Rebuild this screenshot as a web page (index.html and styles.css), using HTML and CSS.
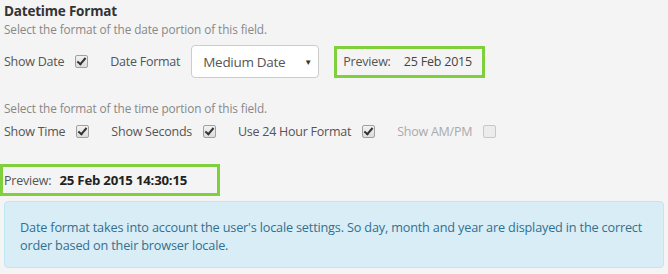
FILE: index.html
```html
<!DOCTYPE html>
<html>
<head>
<meta charset="utf-8">
<link rel="stylesheet" href="styles.css">
</head>
<body>
<div class="panel">
  <div class="title">Datetime Format</div>
  <div class="hint hint-date">Select the format of the date portion of this field.</div>
  <div class="row row-date">
    <div class="field"><span class="label">Show Date</span><span class="cb checked"></span></div>
    <div class="field"><span class="label">Date Format</span>
      <div class="select"><span>Medium Date</span><span class="arrow">▼</span></div>
    </div>
    <div class="preview preview-date"><span class="p-label">Preview:</span><span class="p-value">25 Feb 2015</span></div>
  </div>
  <div class="hint hint-time">Select the format of the time portion of this field.</div>
  <div class="row row-time">
    <div class="field"><span class="label">Show Time</span><span class="cb checked"></span></div>
    <div class="field"><span class="label">Show Seconds</span><span class="cb checked"></span></div>
    <div class="field"><span class="label">Use 24 Hour Format</span><span class="cb checked"></span></div>
    <div class="field disabled"><span class="label">Show AM/PM</span><span class="cb"></span></div>
  </div>
  <div class="preview preview-full"><span class="p-label">Preview:</span><span class="p-value bold">25 Feb 2015 14:30:15</span></div>
  <div class="info">Date format takes into account the user's locale settings. So day, month and year are displayed in the correct order based on their browser locale.</div>
</div>
</body>
</html>
```
FILE: styles.css
```css
html, body {
  margin: 0;
  padding: 0;
  background: #f4f4f4;
}
body {
  font-family: "Open Sans", "Noto Sans", sans-serif;
  color: #555;
  font-size: 12.5px;
}
.panel {
  width: 668px;
  height: 274px;
  overflow: hidden;
}
.title {
  padding: 1px 0 0 4px;
  font-weight: bold;
  font-size: 13.5px;
  line-height: 20px;
  color: #333;
  letter-spacing: -0.2px;
}
.hint {
  padding-left: 4px;
  font-size: 11.8px;
  line-height: 16px;
  color: #888;
  letter-spacing: -0.1px;
}
.row {
  display: flex;
  align-items: center;
  padding-left: 4px;
}
.row-date {
  margin-top: 8px;
  height: 33px;
}
.field {
  display: flex;
  align-items: center;
  margin-right: 21px;
}
.row-date .field:first-child { margin-right: 22px; }
.row-time .field { margin-right: 22px; }
.label {
  letter-spacing: -0.25px;
  margin-right: 11px;
  white-space: nowrap;
}
.cb {
  width: 11px;
  height: 11px;
  border: 1px solid #a0a0a0;
  border-radius: 2px;
  background: linear-gradient(#f2f2f2, #dcdcdc);
  position: relative;
}
.cb.checked::after {
  content: "";
  position: absolute;
  left: 3px;
  top: 0px;
  width: 3px;
  height: 7px;
  border: solid #333;
  border-width: 0 2px 2px 0;
  transform: rotate(40deg);
}
.disabled { color: #aaa; }
.disabled .cb {
  border-color: #c8c8c8;
  background: #ececec;
}
.select {
  width: 126px;
  height: 31px;
  border: 1px solid #ccc;
  border-radius: 4px;
  background: #fff;
  display: flex;
  align-items: center;
  justify-content: space-between;
  box-sizing: content-box;
  padding: 0;
  font-size: 13.5px;
  color: #555;
}
.select span:first-child {
  padding-left: 11px;
  letter-spacing: -0.3px;
}
.arrow {
  font-size: 8px;
  color: #333;
  padding-right: 6px;
}
.row-date .field:nth-child(2) { margin-right: 15px; }
.preview {
  border: 3px solid #7fd03c;
  box-sizing: border-box;
  display: flex;
  align-items: center;
}
.preview-date {
  width: 151px;
  height: 32px;
  padding-left: 6px;
}
.preview-date .p-label { margin-right: 13px; }
.p-label { letter-spacing: -0.2px; }
.p-value { color: #444; letter-spacing: -0.2px; }
.hint-time { margin-top: 22px; }
.row-time {
  margin-top: 7px;
  height: 17px;
}
.preview-full {
  margin-top: 24px;
  width: 220px;
  height: 32px;
  padding-left: 1px;
}
.preview-full .p-label { margin-right: 8px; }
.bold {
  font-weight: bold;
  font-size: 13.2px;
  color: #222;
}
.info {
  margin: 5px 4px 0 4px;
  height: 67px;
  box-sizing: border-box;
  background: #d9edf7;
  border: 1px solid #bce8f1;
  border-radius: 4px;
  color: #31708f;
  padding: 16px 8px 0 15px;
  font-size: 12.7px;
  line-height: 18px;
  letter-spacing: -0.18px;
}
```
